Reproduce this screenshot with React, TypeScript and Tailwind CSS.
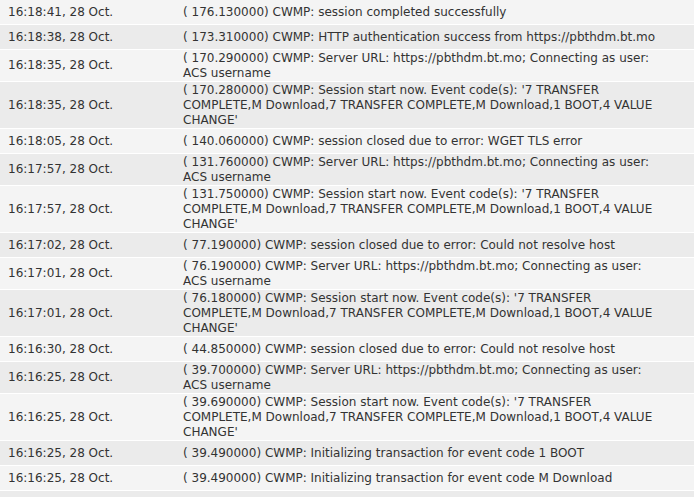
const logs: [string, string][] = [
    ["16:18:41, 28 Oct.", "( 176.130000) CWMP: session completed successfully"],
    ["16:18:38, 28 Oct.", "( 173.310000) CWMP: HTTP authentication success from https://pbthdm.bt.mo"],
    ["16:18:35, 28 Oct.", "( 170.290000) CWMP: Server URL: https://pbthdm.bt.mo; Connecting as user: ACS username"],
    ["16:18:35, 28 Oct.", "( 170.280000) CWMP: Session start now. Event code(s): '7 TRANSFER COMPLETE,M Download,7 TRANSFER COMPLETE,M Download,1 BOOT,4 VALUE CHANGE'"],
    ["16:18:05, 28 Oct.", "( 140.060000) CWMP: session closed due to error: WGET TLS error"],
    ["16:17:57, 28 Oct.", "( 131.760000) CWMP: Server URL: https://pbthdm.bt.mo; Connecting as user: ACS username"],
    ["16:17:57, 28 Oct.", "( 131.750000) CWMP: Session start now. Event code(s): '7 TRANSFER COMPLETE,M Download,7 TRANSFER COMPLETE,M Download,1 BOOT,4 VALUE CHANGE'"],
    ["16:17:02, 28 Oct.", "( 77.190000) CWMP: session closed due to error: Could not resolve host"],
    ["16:17:01, 28 Oct.", "( 76.190000) CWMP: Server URL: https://pbthdm.bt.mo; Connecting as user: ACS username"],
    ["16:17:01, 28 Oct.", "( 76.180000) CWMP: Session start now. Event code(s): '7 TRANSFER COMPLETE,M Download,7 TRANSFER COMPLETE,M Download,1 BOOT,4 VALUE CHANGE'"],
    ["16:16:30, 28 Oct.", "( 44.850000) CWMP: session closed due to error: Could not resolve host"],
    ["16:16:25, 28 Oct.", "( 39.700000) CWMP: Server URL: https://pbthdm.bt.mo; Connecting as user: ACS username"],
    ["16:16:25, 28 Oct.", "( 39.690000) CWMP: Session start now. Event code(s): '7 TRANSFER COMPLETE,M Download,7 TRANSFER COMPLETE,M Download,1 BOOT,4 VALUE CHANGE'"],
    ["16:16:25, 28 Oct.", "( 39.490000) CWMP: Initializing transaction for event code 1 BOOT"],
    ["16:16:25, 28 Oct.", "( 39.490000) CWMP: Initializing transaction for event code M Download"],
]

const App = () => {
    return (
        <div className="w-[694px] h-[497px] overflow-hidden bg-white text-[12px] leading-[15px] text-[#333] font-['DejaVu_Sans',Verdana,sans-serif]">
            {logs.map(([time, msg], i) => (
                <div
                    key={i}
                    className={`flex items-center min-h-[25px] border-b border-white ${i % 2 === 0 ? "bg-[#f4f4f4]" : "bg-[#ebebeb]"}`}
                >
                    {/* TIME */}
                    <div className="w-[183px] shrink-0 pl-2">{time}</div>
                    {/* MESSAGE */}
                    <div className="flex-1 pt-px pr-[26px]">{msg}</div>
                </div>
            ))}
            {/* next row, cut off by the window */}
            <div className="h-[25px] bg-[#ebebeb]" />
        </div>
    )
}

export default App
